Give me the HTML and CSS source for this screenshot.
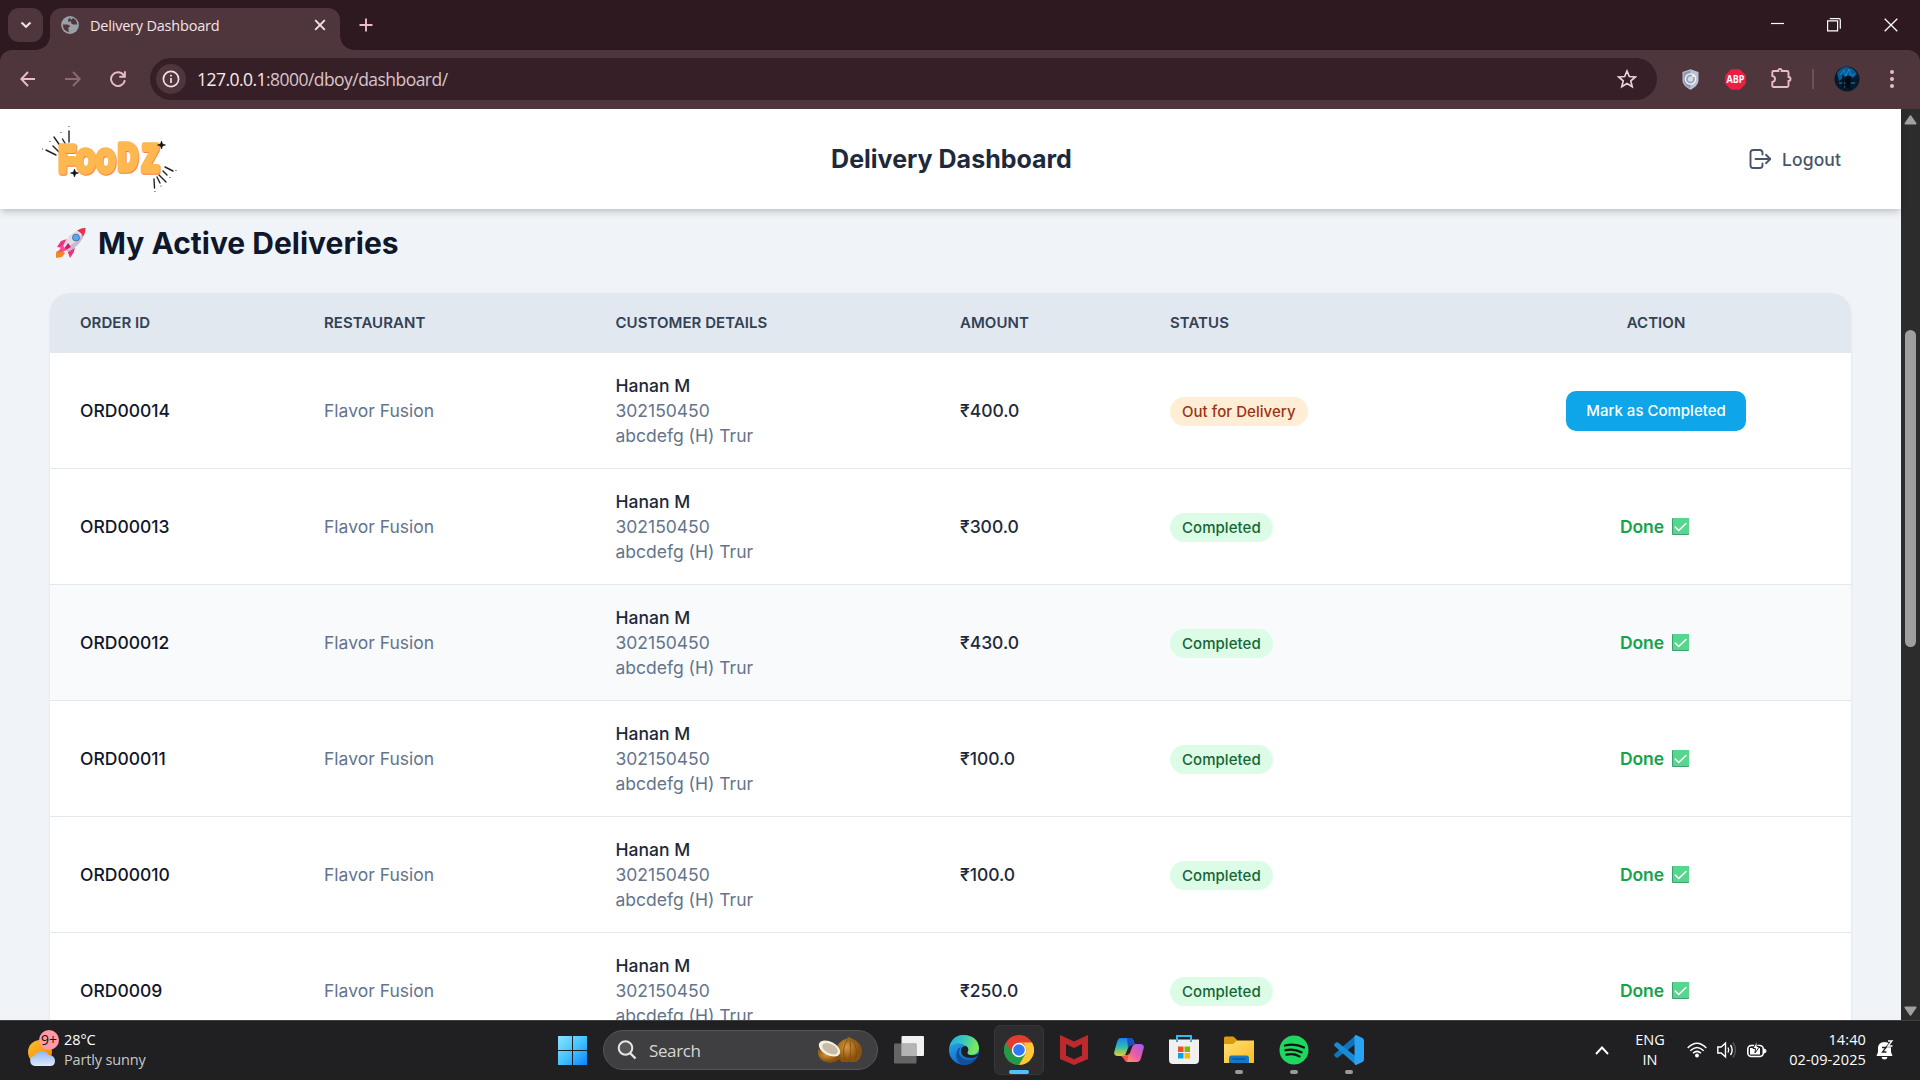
FILE: index.html
```html
<!DOCTYPE html>
<html lang="en">
<head>
<meta charset="utf-8">
<title>Delivery Dashboard</title>
<link rel="stylesheet" href="styles.css">
</head>
<body>
<svg class="defs" width="0" height="0">
  <defs>
    <linearGradient id="winG" x1="0" y1="0" x2="1" y2="1"><stop offset="0" stop-color="#8be3ff"/><stop offset=".5" stop-color="#45c4ff"/><stop offset="1" stop-color="#0a84ff"/></linearGradient>
    <linearGradient id="edgeA" x1="0" y1="0" x2="1" y2=".3"><stop offset="0" stop-color="#2aa7e6"/><stop offset=".5" stop-color="#36c6c0"/><stop offset="1" stop-color="#7bea5a"/></linearGradient>
    <linearGradient id="edgeB" x1="0" y1="0" x2=".6" y2="1"><stop offset="0" stop-color="#2fb4ea"/><stop offset="1" stop-color="#0b5ec9"/></linearGradient>
    <linearGradient id="copA" x1="0" y1="0" x2="0" y2="1"><stop offset="0" stop-color="#1f7ff0"/><stop offset=".5" stop-color="#2fbdb0"/><stop offset="1" stop-color="#e8cf2a"/></linearGradient>
    <linearGradient id="copB" x1="1" y1="0" x2="0" y2="1"><stop offset="0" stop-color="#9a5cf5"/><stop offset=".5" stop-color="#ec5aa4"/><stop offset="1" stop-color="#ffa35c"/></linearGradient>
    <linearGradient id="folder" x1="0" y1="0" x2="1" y2="1"><stop offset="0" stop-color="#ffe07a"/><stop offset="1" stop-color="#f8bc1c"/></linearGradient>
    <linearGradient id="cloud" x1="0" y1="0" x2="0" y2="1"><stop offset="0" stop-color="#8db4f4"/><stop offset="1" stop-color="#dfeaff"/></linearGradient>
    <linearGradient id="sun" x1="0" y1="0" x2="1" y2="1"><stop offset="0" stop-color="#fbc02d"/><stop offset="1" stop-color="#f57c00"/></linearGradient>
    <radialGradient id="nut" cx=".4" cy=".4"><stop offset="0" stop-color="#d8983c"/><stop offset="1" stop-color="#8a5210"/></radialGradient>
    <symbol id="done" viewBox="0 0 17 17"><rect width="17" height="17" rx=".8" fill="#3f9f70"/><rect x="1" width="16" height="16" rx=".5" fill="#57d68d"/><path d="M3.200 9l3.500 3.500 7.300-7" fill="none" stroke="#fff" stroke-width="1.600" stroke-linecap="round" stroke-linejoin="round"/></symbol>
  </defs>
</svg>

<header class="tabstrip">
  <div class="tab-search"><svg width="12" height="8" viewBox="0 0 12 8"><path d="M1.500 1.500l4.500 4.300 4.500-4.300" fill="none" stroke="#f3dde2" stroke-width="2.200"/></svg></div>
  <div class="tab">
    <svg width="18" height="18" viewBox="0 0 18 18"><circle cx="9" cy="9" r="8.900" fill="#9aa0a6"/><path d="M1.800 8.500h4.700q2.500.3 2.500 2.500H7.500v3.200q-.2 1.300 1.500 2-6.800-.4-7.200-7.700zM9.500 1.800Q7 2.500 7 4v1.500h3q0 3 2.500 3h3.700q-.4-5.200-4.700-6.400l-.3 1.400H9.500z" fill="#4e363c"/></svg>
    <span class="tab-title">Delivery Dashboard</span>
    <svg width="12" height="12" viewBox="0 0 12 12"><path d="M1.200 1.200l9.600 9.600M10.800 1.200l-9.600 9.600" stroke="#f5e3e7" stroke-width="1.900"/></svg>
  </div>
  <svg class="new-tab" width="14" height="14" viewBox="0 0 14 14"><path d="M7 .5v13M.5 7h13" stroke="#e9bcc7" stroke-width="1.900"/></svg>
  <div class="window-buttons">
    <svg width="14" height="14" viewBox="0 0 14 14"><path d="M1 5.500h13" stroke="#fff" stroke-width="1.200"/></svg>
    <svg width="14" height="14" viewBox="0 0 14 14"><path d="M.6 2.800h10v10h-10zM2.800.7h9.200q1.300 0 1.300 1.300v8.800" fill="none" stroke="#fff" stroke-width="1.200"/></svg>
    <svg width="14" height="14" viewBox="0 0 14 14"><path d="M.7.7l12.600 12.600M13.300.7L.7 13.300" stroke="#fff" stroke-width="1.300"/></svg>
  </div>
</header>

<nav class="toolbar">
  <svg class="back" width="16" height="16" viewBox="0 0 16 16"><path d="M15 8H1.500M8 1L1.300 8 8 15" fill="none" stroke="#e9bcc7" stroke-width="1.900"/></svg>
  <svg class="forward" width="16" height="16" viewBox="0 0 16 16"><path d="M0 8h14.500M8 1l6.700 7L8 15" fill="none" stroke="#8b6a72" stroke-width="1.900"/></svg>
  <svg class="reload" width="16" height="16" viewBox="0 0 16 16"><path d="M14.800 9.200A6.900 6.900 0 1 1 13.500 4l1 1.300M14.900.3v5.500H9.300" fill="none" stroke="#e9bcc7" stroke-width="1.900"/></svg>
  <div class="address">
    <div class="site-info"><svg width="18" height="18" viewBox="0 0 18 18"><circle cx="9" cy="9" r="7.600" fill="none" stroke="#f3dde2" stroke-width="1.700"/><path d="M9 8v5M9 4.800v1.800" stroke="#f3dde2" stroke-width="1.700"/></svg></div>
    <span class="url"><b>127.0.0.1</b>:8000/dboy/dashboard/</span>
    <svg class="star" width="20" height="20" viewBox="0 0 20 20"><path d="M10 2l2.300 5.500 6 .5-4.500 3.900 1.400 5.800L10 14.600l-5.200 3.100 1.400-5.800L1.700 8l6-.5z" fill="none" stroke="#e6d3d8" stroke-width="1.700"/></svg>
  </div>
  <svg class="shield" width="17" height="21" viewBox="0 0 17 21"><path d="M8.500.3L16.500 3v8c0 4.500-4 8-8 9.700C4.500 19 .5 15.500.5 11V3z" fill="#b8c2d2"/><path d="M8.500 1.500v18C5 18 1.600 15 1.600 11V3.800z" fill="#8e9bb0"/><circle cx="8.500" cy="10" r="5.200" fill="#9ba8ba" stroke="#f3f6fa" stroke-width="1.300"/><circle cx="8.500" cy="10" r="2.600" fill="#d5dde7"/><path d="M10 7.500l2.500-1" stroke="#fff" stroke-width="1.500"/></svg>
  <svg class="abp" width="21" height="21" viewBox="0 0 21 21"><path d="M6.200.2h8.600l6 6v8.600l-6 6H6.200l-6-6V6.200z" fill="#ed1e45"/><text x="10.500" y="14.400" text-anchor="middle" textLength="18" lengthAdjust="spacingAndGlyphs">ABP</text></svg>
  <svg class="puzzle" width="21" height="21" viewBox="0 0 21 21"><path d="M2.500 3h4.800q-.2-2 1.700-2t1.700 2H16q1.500 0 1.500 1.500V9q2 .1 2 2t-2 2v4.500q0 1.500-1.500 1.500H2.500q-1.200 0-1.200-1.200V14q2.700-.3 2.700-3T1.300 8V4.200Q1.300 3 2.500 3z" fill="none" stroke="#e9bcc7" stroke-width="1.900"/></svg>
  <i class="divider"></i>
  <svg class="avatar" width="26" height="26" viewBox="0 0 26 26"><circle cx="13" cy="13" r="12.500" fill="#061a2c"/><path d="M3 7q5-7 10-6 7 1 10 7l-4 4-5-3-5 3-4 3z" fill="#075a96"/><path d="M6 9l4-5 2 6 3-7 2 7 4-2M5 17h16M9 21l8-1" stroke="#1687c6" stroke-width="1" fill="none"/><path d="M9 22V9m7 14V10M12 14q2-3 3 0v7h-3z" stroke="#020a12" stroke-width="1.500" fill="#020a12"/></svg>
  <svg class="menu" width="4" height="18" viewBox="0 0 4 18"><circle cx="2" cy="2" r="2"/><circle cx="2" cy="9" r="2"/><circle cx="2" cy="16" r="2"/></svg>
</nav>

<div class="viewport">
  <div class="page">
    <div class="page-header">
      <svg class="logo" width="140" height="70" viewBox="0 0 140 70">
        <g stroke="#222" stroke-width="1.400" fill="none" stroke-linecap="round"><path d="M6 26l10 5M13 22l6 6M14 13l7 10M22.500 15l3.500 6M29 7v11"/><path d="M125 43l8 4M123 47l4 4M119 51l7 7M117 53l3 6M114 55l.5 9"/><path d="M2.500 25v0M10 17.500v0M21 8.500v0M29 2.500v0M136 46.500v0M130 53.500v0M121 62v0M115 67.500v0" stroke-width="1.200"/></g>
        <text class="logo-text" transform="scale(.75 1)" y="49"><tspan class="cap" x="25" y="48.500">F</tspan><tspan x="48.500" y="48.500">O</tspan><tspan x="75" y="48.500">O</tspan><tspan class="cap" x="104" y="46.500">D</tspan><tspan class="cap" x="136" y="47.500">Z</tspan></text>
        <path d="M121.500 17l1 3 3 1-3 1-1 3-1-3-3-1 3-1zM34.500 45l1 3 3 1-3 1-1 3-1-3-3-1 3-1z" fill="#111" stroke="#111" stroke-width=".6"/>
      </svg>
      <h1>Delivery Dashboard</h1>
      <div class="logout"><svg width="24" height="20" viewBox="0 0 24 20" fill="none" stroke="#475569" stroke-width="1.900" stroke-linecap="round" stroke-linejoin="round"><path d="M13.500 5.600V3.800Q13.500 1 10.700 1H4.300Q1.500 1 1.500 3.800v12.400Q1.500 19 4.300 19h6.400q2.800 0 2.800-2.800v-1.800M6.500 10H21M17 5.800l4.300 4.200-4.300 4.200"/></svg>Logout</div>
    </div>
    <h2><svg width="32" height="32" viewBox="0 0 32 32"><path d="M6 22L1 25v6l6-1 3-4z" fill="#f28a1c"/><path d="M12 12l-6 2-4 6 6 1zM20 19l-1 6-4 6-3-8z" fill="#f0337c"/><path d="M8 19Q12 7 26 2l4 4Q26 18 13 25z" fill="#e3dce6"/><path d="M10 21Q22 16 29 5l1 1Q26 18 13 25z" fill="#c5bccd"/><path d="M22 3.500Q26 1 30.500.8 31 5 28 9.500 26.500 5.500 22 3.500z" fill="#ea2f4c"/><path d="M13 16l-6 9 9-5z" fill="#d4176c"/><path d="M7 18l-4 8 9-3z" fill="#f54b8f"/><circle cx="21" cy="10.500" r="3.800" fill="#4d6c9d"/><circle cx="21" cy="10.500" r="2.900" fill="#55a9fa"/></svg>My Active Deliveries</h2>
    <table>
      <colgroup><col class="c-id"><col class="c-rest"><col class="c-cust"><col class="c-amt"><col class="c-stat"><col class="c-act"></colgroup>
      <thead><tr><th>Order ID</th><th>Restaurant</th><th>Customer Details</th><th>Amount</th><th>Status</th><th class="action">Action</th></tr></thead>
      <tbody>
        <tr><td class="id">ORD00014</td><td>Flavor Fusion</td><td><strong>Hanan M</strong><br>302150450<br>abcdefg (H) Trur</td><td class="amount">₹400.0</td><td><span class="badge out">Out for Delivery</span></td><td class="action"><button>Mark as Completed</button></td></tr>
        <tr><td class="id">ORD00013</td><td>Flavor Fusion</td><td><strong>Hanan M</strong><br>302150450<br>abcdefg (H) Trur</td><td class="amount">₹300.0</td><td><span class="badge">Completed</span></td><td class="action"><span class="done">Done <svg width="17" height="17"><use href="#done"/></svg></span></td></tr>
        <tr class="hovered"><td class="id">ORD00012</td><td>Flavor Fusion</td><td><strong>Hanan M</strong><br>302150450<br>abcdefg (H) Trur</td><td class="amount">₹430.0</td><td><span class="badge">Completed</span></td><td class="action"><span class="done">Done <svg width="17" height="17"><use href="#done"/></svg></span></td></tr>
        <tr><td class="id">ORD00011</td><td>Flavor Fusion</td><td><strong>Hanan M</strong><br>302150450<br>abcdefg (H) Trur</td><td class="amount">₹100.0</td><td><span class="badge">Completed</span></td><td class="action"><span class="done">Done <svg width="17" height="17"><use href="#done"/></svg></span></td></tr>
        <tr><td class="id">ORD00010</td><td>Flavor Fusion</td><td><strong>Hanan M</strong><br>302150450<br>abcdefg (H) Trur</td><td class="amount">₹100.0</td><td><span class="badge">Completed</span></td><td class="action"><span class="done">Done <svg width="17" height="17"><use href="#done"/></svg></span></td></tr>
        <tr><td class="id">ORD0009</td><td>Flavor Fusion</td><td><strong>Hanan M</strong><br>302150450<br>abcdefg (H) Trur</td><td class="amount">₹250.0</td><td><span class="badge">Completed</span></td><td class="action"><span class="done">Done <svg width="17" height="17"><use href="#done"/></svg></span></td></tr>
      </tbody>
    </table>
  </div>
  <div class="scrollbar">
    <svg width="13" height="10" viewBox="0 0 13 10"><path d="M6.500 1.200L11.500 8.500h-10z" fill="#a0a0a0" stroke="#a0a0a0" stroke-width="2" stroke-linejoin="round"/></svg>
    <div class="thumb"></div>
    <svg width="13" height="10" viewBox="0 0 13 10"><path d="M6.500 8.800L1.500 1.500h10z" fill="#a0a0a0" stroke="#a0a0a0" stroke-width="2" stroke-linejoin="round"/></svg>
  </div>
</div>

<footer class="taskbar">
  <div class="weather">
    <svg width="32" height="37" viewBox="0 0 32 37"><circle cx="12" cy="22" r="12" fill="url(#sun)"/><path d="M7 36a5.200 5.200 0 0 1-.5-10.300Q8.500 21 14 21q4.500 0 6.500 4 6.500.5 6.500 5.800 0 5.200-5 5.200z" fill="url(#cloud)"/><circle cx="21" cy="10" r="10" fill="#ff99a4"/><text x="21" y="15" text-anchor="middle">9+</text></svg>
    <div class="weather-text"><span class="temp">28°C</span><span class="sky">Partly sunny</span></div>
  </div>
  <div class="apps">
    <svg class="win" width="29" height="29" viewBox="0 0 29 29"><path d="M0 0h14v14H0zM15 0h14v14H15zM0 15h14v14H0zM15 15h14v14H15z" fill="url(#winG)"/></svg>
    <div class="search">
      <svg width="20" height="20" viewBox="0 0 20 20"><circle cx="8.500" cy="8" r="6.800" fill="#555" stroke="#e6e6e6" stroke-width="2"/><path d="M13 13l5.500 5.500" stroke="#e6e6e6" stroke-width="2.400"/></svg>
      <span>Search</span>
      <svg width="46" height="27" viewBox="0 0 46 27"><path d="M32 0q3 2 6 3 7 4 7 11t-6 11H25q-6-4-6-11t7-11q4-1 6-3z" fill="url(#nut)"/><path d="M31 2q-8 10-2 23M33 2q2 12-1 23M35 3q7 8 3 21" stroke="#7c4a10" fill="none" stroke-width=".8"/><path d="M1 12q-1 8 5 12 8 4 15-1 2-2 2-6z" fill="url(#nut)"/><ellipse cx="12.500" cy="11.500" rx="11.500" ry="6.800" transform="rotate(28 12.500 11.500)" fill="#f6f0e3"/><ellipse cx="13" cy="11.700" rx="8.500" ry="4.700" transform="rotate(28 13 11.700)" fill="#c6bba8"/></svg>
    </div>
    <div class="app"><svg width="30" height="28" viewBox="0 0 30 28"><rect x="7.500" y="0" width="22.500" height="20" rx="1" fill="#f1f1f1"/><rect x="0" y="7.500" width="22.500" height="20" rx="1" fill="#777" fill-opacity=".8"/><path d="M7.500 7.500h15v12.500h-15z" fill="#b4b4b4"/></svg></div>
    <div class="app"><svg width="30" height="30" viewBox="0 0 30 30"><circle cx="15" cy="15" r="15" fill="url(#edgeB)"/><path d="M.5 12Q3 0 15 0q14 1 15 13 0 7-8 7-6 0-3-4 1-3-2-5Q9 5 .5 12z" fill="url(#edgeA)"/><path d="M12 12q-5 8 3 12 6 3 12-1Q22 31 13 30 5 25 8 16q1-3 4-4z" fill="#12509e"/><path d="M17 11q-5 0-5 5 0 7 10 7 3 0 6.500-2l.6-2q-4 2-8 1-4-1-2-4 1-3-2.100-5z" fill="#202022"/></svg></div>
    <div class="app active"><svg width="30" height="30" viewBox="0 0 30 30"><circle cx="15" cy="15" r="15" fill="#e33b2e"/><path d="M2 7.500A15 15 0 0 0 15 30l6.500-11.200L15 21.500 8.500 18.800z" fill="#219a4b"/><path d="M28 7.500A15 15 0 0 1 15 30l6.500-11.200 1-4.300L20 8.500 15 7.500z" fill="#fcc934"/><circle cx="15" cy="15" r="7.200" fill="#fff"/><circle cx="15" cy="15" r="5.800" fill="#3079f0"/></svg></div>
    <div class="app"><svg width="28" height="30" viewBox="0 0 28 30"><path d="M0 0l14 6.500L28 0v24l-14 6-14-6zM6 9v11.500l8 3.700 8-3.700V9l-8 4z" fill="#bd2a2e" fill-rule="evenodd"/></svg></div>
    <div class="app"><svg width="30" height="28" viewBox="0 0 30 28"><path d="M7 2h9q3 0 4 4l1 3h-3q-3 0-4 3l-2 5q-1 3-4 3H4q-5 0-3.500-5l2.500-9q1-4 4-4z" fill="url(#copA)"/><path d="M13 2h4q2 0 3 4l1 3h-3q-3 0-4 3z" fill="#184fc4"/><path d="M23 26h-9q-3 0-4-4l-1-3h3q3 0 4-3l2-5q1-3 4-3h4q5 0 3.500 5L27 22q-1 4-4 4z" fill="url(#copB)"/><path d="M12 19.500q3 0 4-3l2-5.500q1-3 3-3l-1 1q-2 0-4 4l-2 5z" fill="#202022"/><path d="M7 20h6l2-3-2 9q-2 0-3-3z" fill="#f1553d"/></svg></div>
    <div class="app"><svg width="30" height="30" viewBox="0 0 30 30"><path d="M8 6V1h14v5" fill="none" stroke="#35b7ef" stroke-width="2"/><path d="M0 4.500h7v2h2v-2h12v2h2v-2h7V25q0 4-4 4H4q-4 0-4-4z" fill="#f0f0f0"/><path d="M9 11.500h5.500V17H9z" fill="#f25022"/><path d="M15.500 11.500H21V17h-5.500z" fill="#7fba00"/><path d="M9 18h5.500v5.500H9z" fill="#00a4ef"/><path d="M15.500 18H21v5.500h-5.500z" fill="#ffb900"/></svg></div>
    <div class="app running"><svg width="30" height="28" viewBox="0 0 30 28"><path d="M0 12V2q0-1.500 1.500-1.500h8L13 4v8z" fill="#dc9b0c"/><path d="M0 8h9l4-3.500h17V27H0z" fill="url(#folder)"/><path d="M5 27v-5q0-2.500 2.500-2.500h15q2.500 0 2.500 2.500v5z" fill="#1478ca"/><path d="M8.500 23h13" stroke="#0b4d8e" stroke-width="1.200"/></svg></div>
    <div class="app running"><svg width="30" height="30" viewBox="0 0 30 30"><circle cx="15" cy="15" r="14.500" fill="#1ed760"/><path d="M6 10.500q10-2.500 19 2M6.500 15.200q8.500-2 16 2M7.500 19.700q7-1.700 13 1.700" fill="none" stroke="#101410" stroke-width="2.300" stroke-linecap="round"/></svg></div>
    <div class="app running"><svg width="30" height="30" viewBox="0 0 30 30"><path d="M22 8.500L4 22.500q-1 .7-2 0L.5 21q-.9-1 0-2L22 0z" fill="#0f73bd"/><path d="M22 21.500L4 7.500q-1-.7-2 0L.5 9q-.9 1 0 2L22 30z" fill="#168bd6"/><path d="M22 0l6.500 3q1.500.8 1.500 2.500v19q0 1.700-1.500 2.500L22 30q-1.500-.2-1.500-2V2q0-1.800 1.500-2z" fill="#2aa4f2"/></svg></div>
  </div>
  <div class="tray">
    <svg class="chev" width="14" height="9" viewBox="0 0 14 9"><path d="M1 8l6-6.500L13 8" fill="none" stroke="#fff" stroke-width="1.900"/></svg>
    <div class="lang"><span>ENG</span><span>IN</span></div>
    <svg class="wifi" width="20" height="16" viewBox="0 0 20 16" fill="none" stroke="#fff" stroke-width="1.500"><path d="M.7 6q9.300-9.500 18.600 0M3.300 8.700q6.700-6.500 13.400 0M6 11.300q4-3.800 8 0"/><circle cx="10" cy="13.500" r="1.200" fill="#fff"/></svg>
    <svg class="vol" width="20" height="18" viewBox="0 0 20 18" fill="none" stroke="#fff" stroke-width="1.400"><path d="M.8 6h3.400L8.500 2v14L4.200 12H.8zM11 6.500q1.500 2.500 0 5M13.500 4q3.300 5 0 10"/><path d="M16 1.500q5 7.500 0 15" stroke="#555"/></svg>
    <svg class="batt" width="20" height="18" viewBox="0 0 20 18"><rect x=".8" y="4.500" width="15.500" height="11" rx="3.500" fill="none" stroke="#fff" stroke-width="1.600"/><path d="M17.500 8v4q1.500-.5 1.500-2T17.500 8z" fill="#fff" stroke="#fff"/><path d="M3 7h10v6.500H3z" fill="#fff"/><path d="M10 0L6 7.500h2.500L8 12l4.500-6.500H10z" fill="#fff" stroke="#202022" stroke-width="1"/></svg>
    <div class="clock"><span>14:40</span><span>02-09-2025</span></div>
    <svg class="bell" width="18" height="20" viewBox="0 0 18 20"><path d="M2 8.500Q2 2 8.500 2T15 8.500V12l1.500 4H.5L2 12zM5.500 17h6q-.5 2.500-3 2.500t-3-2.500z" fill="#fff"/><path d="M6 7.500h4L6.500 12h4" fill="none" stroke="#202022" stroke-width="1.300"/><path d="M12 1h4l-4 5h4.500" fill="none" stroke="#202022" stroke-width="2.600"/><path d="M12 1h4l-4 5h4.500" fill="none" stroke="#fff" stroke-width="1.300"/></svg>
  </div>
</footer>
</body>
</html>
```
FILE: styles.css
```css
* { box-sizing: border-box; }
body { margin: 0; width: 1920px; height: 1080px; overflow: hidden; display: flex; flex-direction: column; background: #2e1920; font-family: "Open Sans", "Noto Sans", sans-serif; }
svg { display: block; flex: none; }
.defs { position: absolute; }
span { white-space: nowrap; }

.tabstrip { height: 50px; flex: none; display: flex; align-items: flex-start; padding: 8px 22px 0 8px; background: #2e1920; }
.tab-search { width: 35px; height: 34px; border-radius: 11px; background: #4e363c; display: flex; align-items: center; justify-content: center; margin-right: 7px; }
.tab { position: relative; width: 290px; height: 42px; border-radius: 12px 12px 0 0; background: #4e363c; display: flex; align-items: center; padding: 0 14px 8px 11px; }
.tab::before, .tab::after { content: ""; position: absolute; bottom: 0; width: 14px; height: 14px; }
.tab::before { left: -14px; background: radial-gradient(circle at 0 0, transparent 13.500px, #4e363c 14px); }
.tab::after { right: -14px; background: radial-gradient(circle at 100% 0, transparent 13.500px, #4e363c 14px); }
.tab-title { flex: 1; margin-left: 11px; font-size: 14.500px; letter-spacing: -0.210px; color: #f5e3e7; }
.new-tab { margin: 10px 0 0 19px; }
.window-buttons { margin-left: auto; display: flex; gap: 43px; padding-top: 10px; }

.toolbar { height: 59px; flex: none; display: flex; align-items: center; padding: 0 26px 2px 20px; background: #4e363c; border-radius: 12px 12px 0 0; }
.forward { margin-left: 29px; }
.reload { margin-left: 29px; }
.address { width: 1507px; height: 42px; margin-left: 24px; border-radius: 21px; background: #371f27; display: flex; align-items: center; padding: 0 20px 0 6px; }
.site-info { width: 30px; height: 30px; border-radius: 50%; background: #4e363c; display: flex; align-items: center; justify-content: center; }
.url { margin: 1px 0 0 11px; flex: 1; font-size: 17.500px; letter-spacing: -0.540px; color: #d8c5ca; }
.url b { font-weight: 400; color: #f8ebee; }
.shield { margin: 2px 0 0 25px; }
.abp { margin: 2px 0 0 26px; }
.abp text { fill: #fff; font: 700 10.500px "Open Sans", sans-serif; }
.puzzle { margin-left: 25px; }
.divider { width: 2px; height: 20px; background: #6c5158; margin-left: 20px; }
.avatar { margin-left: 20px; }
.menu { margin-left: 30px; fill: #e9bcc7; }

.viewport { height: 911px; flex: none; display: flex; overflow: hidden; }
.page { width: 1901px; background: #f0f4f9; font-family: Inter, sans-serif; }
.page-header { position: relative; z-index: 1; height: 100px; background: #fff; box-shadow: 0 5px 7px -1px rgba(0,0,0,.13), 0 3px 5px -2px rgba(0,0,0,.1); display: grid; grid-template-columns: 1fr auto 1fr; align-items: center; padding: 0 60px 0 40px; }
.logo-text { font: 700 32px "Liberation Sans", sans-serif; fill: #ffb84f; stroke: #ffb84f; stroke-width: 5.500px; stroke-linejoin: round; filter: drop-shadow(1px 1px 0 #f47f3c); }
.cap { font-size: 36px; }
h1 { margin: 0 0 0 22px; font-size: 25px; font-weight: 700; line-height: 36px; color: #1e293b; }
.logout { justify-self: end; display: flex; align-items: center; gap: 9px; font-size: 17.500px; font-weight: 500; letter-spacing: 0.100px; color: #475569; }
h2 { margin: 15px 0 0 55px; height: 38px; display: flex; align-items: center; gap: 11px; font-size: 30px; font-weight: 700; color: #0f172a; }
table { width: 1801px; margin: 31px 0 0 50px; table-layout: fixed; border-collapse: separate; border-spacing: 0; background: #fff; border-radius: 20px 20px 0 0; overflow: hidden; box-shadow: 0 1px 3px rgba(0,0,0,.08); }
.c-id { width: 244px; } .c-rest { width: 291.500px; } .c-cust { width: 344.500px; } .c-amt { width: 210px; } .c-stat { width: 321px; } .c-act { width: 390px; }
th { height: 60px; padding: 0 30px 2px; background: #e2e8f0; text-align: left; text-transform: uppercase; font-size: 15px; font-weight: 600; letter-spacing: 0.050px; color: #334155; }
td { height: 116px; padding: 0 30px; border-bottom: 1px solid #e2e8f0; font-size: 17.500px; line-height: 25px; color: #64748b; }
.hovered td { background: #f8fafc; }
td strong { font-weight: 500; color: #1e293b; }
td.id { font-weight: 500; color: #0f172a; }
td.amount { font-weight: 500; color: #1e293b; }
.action { text-align: center; }
.badge { display: inline-block; margin-top: 1px; padding: 2px 12px; border-radius: 15px; background: #dcfce7; color: #166534; font-size: 15px; font-weight: 500; letter-spacing: 0.050px; line-height: 25px; vertical-align: middle; }
.out { background: #ffedd5; color: #9a3412; }
button { height: 40px; width: 180px; border: 0; border-radius: 10px; background: #0ea5e9; color: #fff; font: 500 15px Inter, sans-serif; }
.done { display: inline-flex; align-items: center; gap: 8px; margin-right: 3px; font-weight: 600; letter-spacing: -0.050px; color: #16a34a; }

.scrollbar { width: 19px; background: #2c2c2c; display: flex; flex-direction: column; align-items: center; padding: 6px 0 4px; }
.thumb { width: 11px; height: 317px; border-radius: 6px; background: #9f9f9f; margin: 205px 0 auto; }

.taskbar { height: 60px; flex: none; position: relative; display: flex; align-items: center; background: #202022; border-top: 1px solid #3f4140; color: #fff; }
.weather { width: 555px; display: flex; align-items: center; padding-left: 28px; gap: 4px; }
.weather svg { margin-top: -5px; }
.weather text { font-size: 14px; fill: #111; }
.weather-text { display: flex; flex-direction: column; margin-top: -2px; font-size: 14.500px; line-height: 20px; }
.temp { letter-spacing: -0.100px; }
.sky { color: #c8c8c8; letter-spacing: -0.160px; }
.apps { display: flex; align-items: center; }
.win { margin: 0 3px 0 3px; }
.search { width: 275px; height: 40px; margin: -1px 6px 0 13px; border-radius: 20px; border: 1px solid #555557; background: #3f3f41; display: flex; align-items: center; padding: 0 14px 0 13px; }
.search span { flex: 1; margin-left: 12px; font-size: 17px; letter-spacing: -0.380px; color: #d6d6d6; }
.app { position: relative; width: 50px; height: 50px; margin: -1px 5px 0 0; border-radius: 6px; display: flex; align-items: center; justify-content: center; }
.active { background: #2d2d2f; border: 1px solid #363638; }
.active::after, .running::after { content: ""; position: absolute; bottom: 1px; left: 50%; transform: translateX(-50%); width: 8px; height: 4px; border-radius: 2px; background: #9a9a9a; }
.active::after { width: 20px; background: #4cc2ff; bottom: 0; }
.tray { margin: -1px 0 0 auto; display: flex; align-items: center; padding-right: 26px; }
.lang, .clock { display: flex; flex-direction: column; font-size: 14.500px; line-height: 20px; letter-spacing: 0; }
.lang { width: 30px; align-items: center; margin-left: 26px; }
.wifi { margin-left: 22px; }
.vol { margin-left: 10px; }
.batt { margin-left: 10px; }
.clock { width: 78px; align-items: flex-end; margin: -1px 0 0 21px; letter-spacing: 0.120px; }
.bell { margin-left: 10px; }
```
